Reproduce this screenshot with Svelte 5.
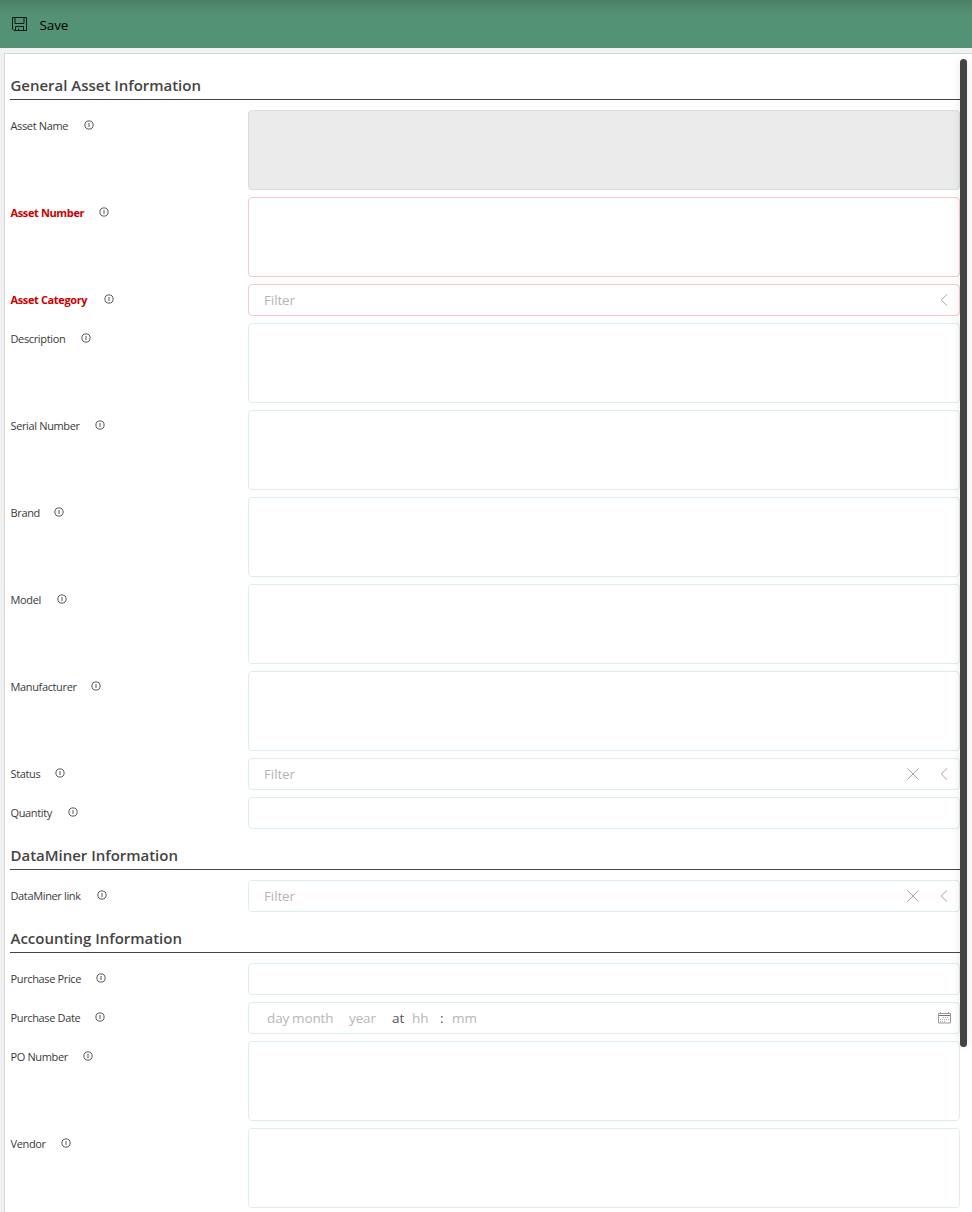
<script>
  // w: width reserved for the label text, in pixels
  const sections = [
    {
      title: 'General Asset Information',
      rows: [
        { label: 'Asset Name', w: 58, kind: 'area', disabled: true },
        { label: 'Asset Number', w: 73, kind: 'area', required: true },
        { label: 'Asset Category', w: 78, kind: 'select', required: true },
        { label: 'Description', w: 55, kind: 'area' },
        { label: 'Serial Number', w: 69, kind: 'area' },
        { label: 'Brand', w: 28, kind: 'area' },
        { label: 'Model', w: 31, kind: 'area' },
        { label: 'Manufacturer', w: 65, kind: 'area' },
        { label: 'Status', w: 29, kind: 'select', clear: true },
        { label: 'Quantity', w: 42, kind: 'line' }
      ]
    },
    {
      title: 'DataMiner Information',
      rows: [{ label: 'DataMiner link', w: 71, kind: 'select', clear: true }]
    },
    {
      title: 'Accounting Information',
      rows: [
        { label: 'Purchase Price', w: 70, kind: 'line' },
        { label: 'Purchase Date', w: 69, kind: 'date' },
        { label: 'PO Number', w: 57, kind: 'area' },
        { label: 'Vendor', w: 35, kind: 'area' }
      ]
    }
  ];
</script>

<div class="app">
  <header>
    <svg class="disk" width="16" height="16" viewBox="0 0 16 16">
      <path d="M1.500 1.500h14v13H3L1.500 13zM4 1.500v6h9v-6M4.500 14.500v-4h8v4M7.500 14.500v-2" />
    </svg>
    <span class="save">Save</span>
  </header>

  <main>
    <div class="form">
      {#each sections as section}
        <h2><span>{section.title}</span></h2>
        {#each section.rows as row}
          <div class="row" class:tall={row.kind === 'area'}>
            <div class="label" class:required={row.required}>
              <span class="name" style="width: {row.w}px">{row.label}</span>
              <svg class="info" width="10" height="10" viewBox="0 0 10 10">
                <circle cx="5" cy="5" r="4.100" />
                <path d="M5 3v4" />
              </svg>
            </div>
            <div class="field" class:disabled={row.disabled} class:required={row.required}>
              {#if row.kind === 'select'}
                <span class="hint">Filter</span>
                {#if row.clear}
                  <svg class="cross" width="12" height="12" viewBox="0 0 12 12"><path d="M.3.3l11.400 11.400M11.700.3L.3 11.700" /></svg>
                {/if}
                <svg class="chev" width="8" height="12" viewBox="0 0 8 12"><path d="M7.200.3L1.200 6l6 5.700" /></svg>
              {:else if row.kind === 'date'}
                <span class="part day">day</span>
                <span class="part month">month</span>
                <span class="part year">year</span>
                <span class="part at">at</span>
                <span class="part hh">hh</span>
                <span class="part colon">:</span>
                <span class="part mm">mm</span>
                <svg class="cal" width="13" height="12" viewBox="0 0 13 12">
                  <path d="M.5 1.500h12v9.500H.5zM2.500 0v2M10.500 0v2" />
                  <path class="bar" d="M1 3.500h11" />
                  <path class="dots" d="M5 5.500h6M2 7.500h9M2 9.500h6" />
                </svg>
              {/if}
            </div>
          </div>
        {/each}
      {/each}
    </div>
    <div class="scroll"></div>
  </main>
</div>

<style>
  :global(body) {
    margin: 0;
    background: #f1f1f1;
    overflow: hidden;
  }
  .app {
    height: 1212px;
    overflow: hidden;
    display: flex;
    flex-direction: column;
    font-family: 'Open Sans', 'Noto Sans', sans-serif;
    color: #444;
  }
  header {
    flex: none;
    height: 48px;
    box-sizing: border-box;
    padding: 1px 0 0 11px;
    display: flex;
    align-items: center;
    gap: 12.5px;
    background: linear-gradient(#4b7f67, #549275 14px);
    color: #000;
  }
  svg { flex: none; fill: none; stroke: #444; }
  .disk { stroke: #0b1a14; margin-top: -1px; }
  .save { font-size: 13.5px; line-height: 20px; letter-spacing: -0.1px; }
  main {
    flex: 1;
    min-height: 0;
    margin: 5px 0 0 4px;
    border-top: 1px solid #d8d8d8;
    border-left: 1px solid #d8d8d8;
    background: #fff;
    display: flex;
    align-items: flex-start;
  }
  .form { width: 955px; padding: 12px 0 0 5px; box-sizing: border-box; }
  h2 {
    margin: 0 0 10px;
    height: 34px;
    box-sizing: border-box;
    border-bottom: 1px solid #444;
    padding-left: 0.5px;
    font-size: 15px;
    line-height: 39px;
    font-weight: 600;
    letter-spacing: -0.02px;
  }
  .row { display: flex; height: 32px; margin-bottom: 7px; }
  .row.tall { height: 80px; }
  .label {
    width: 238px;
    height: 32px;
    padding-left: 0.5px;
    box-sizing: border-box;
    display: flex;
    align-items: center;
    font-size: 11px;
    letter-spacing: -0.36px;
    color: #3a3a3a;
  }
  .name { white-space: nowrap; line-height: 32px; flex: none; }
  .label.required .name { color: #c80000; font-weight: 700; letter-spacing: -0.37px; }
  .info { margin: -2px 0 0 15.2px; stroke: #555; stroke-width: 1; }
  .field {
    flex: 1;
    box-sizing: border-box;
    border: 1px solid #dceee9;
    border-radius: 4px;
    display: flex;
    align-items: center;
    padding: 0 11px 0 15px;
    font-size: 13.5px;
    letter-spacing: -0.12px;
    color: #b5b5b5;
  }
  .field.required { border-color: #f6c9c9; }
  .field.disabled { background: #ebebeb; border-color: #d0dfdb; }
  .hint { margin-right: auto; }
  .field svg { stroke: #a4a4a4; }
  .cross { margin-right: 21.5px; }
  .part { flex: none; white-space: nowrap; }
  .day { width: 25px; margin-left: 3px; }
  .month { width: 57px; }
  .year { width: 43px; }
  .at { width: 20px; color: #555; }
  .hh { width: 28px; }
  .colon { width: 12px; color: #555; }
  .field .cal { margin: 0 -3px 0 auto; stroke: #999; }
  .field .bar { stroke: #777; }
  .field .dots { stroke: #aaa; stroke-dasharray: 1 1; }
  .scroll {
    width: 7px;
    height: 988px;
    margin-top: 5px;
    border-radius: 4px;
    background: #444;
    box-shadow: 0 0 8px rgba(0, 0, 0, 0.1);
  }
</style>
